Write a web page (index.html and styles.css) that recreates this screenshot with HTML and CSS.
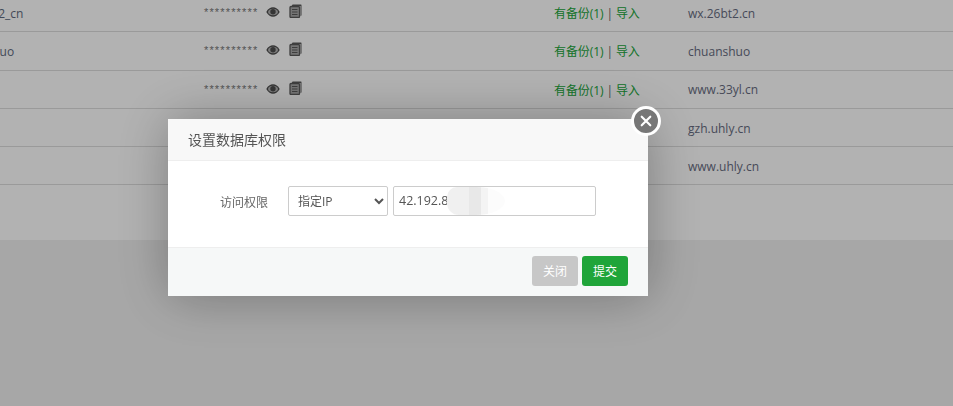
FILE: index.html
```html
<!DOCTYPE html>
<html lang="zh-CN">
<head>
<meta charset="utf-8">
<title>设置数据库权限</title>
<link rel="stylesheet" href="styles.css">
</head>
<body>
<main class="panel">
  <div class="row">
    <span class="name">wx_26bt2_cn</span>
    <span class="pw"><span class="stars">**********</span>
      <svg class="eye" viewBox="0 0 14 10"><path d="M0.3 5C2 1.8 4.3.3 7 .3S12 1.8 13.7 5C12 8.2 9.700 9.700 7 9.700S2 8.200.3 5Z" fill="#4c4c4c"/><ellipse cx="7" cy="5" rx="5" ry="3.300" fill="#b2b2b2"/><circle cx="7" cy="4.800" r="2.700" fill="#4c4c4c"/></svg>
      <svg class="copy" viewBox="0 0 13 14"><path d="M3 1.500Q3 .5 4 .5H12Q12.500.5 12.500 1V11Q12.500 12 11.500 12V2H3Z" fill="#5a5a5a"/><rect x="1" y="2.500" width="9.500" height="11" rx="1" fill="#a8a8a8" stroke="#5a5a5a" stroke-width="1.300"/><path d="M3 5.500H8.500M3 8H8.500M3 10.500H8.500" stroke="#5a5a5a" stroke-width="1"/></svg>
    </span>
    <span class="backup"><a class="ok">有备份(1)</a> <span class="sep">|</span> <a class="ok">导入</a></span>
    <span class="remark">wx.26bt2.cn</span>
  </div>
  <div class="row">
    <span class="name">chuanshuo</span>
    <span class="pw"><span class="stars">**********</span>
      <svg class="eye" viewBox="0 0 14 10"><path d="M0.3 5C2 1.8 4.3.3 7 .3S12 1.8 13.7 5C12 8.2 9.700 9.700 7 9.700S2 8.200.3 5Z" fill="#4c4c4c"/><ellipse cx="7" cy="5" rx="5" ry="3.300" fill="#b2b2b2"/><circle cx="7" cy="4.800" r="2.700" fill="#4c4c4c"/></svg>
      <svg class="copy" viewBox="0 0 13 14"><path d="M3 1.500Q3 .5 4 .5H12Q12.500.5 12.500 1V11Q12.500 12 11.500 12V2H3Z" fill="#5a5a5a"/><rect x="1" y="2.500" width="9.500" height="11" rx="1" fill="#a8a8a8" stroke="#5a5a5a" stroke-width="1.300"/><path d="M3 5.500H8.500M3 8H8.500M3 10.500H8.500" stroke="#5a5a5a" stroke-width="1"/></svg>
    </span>
    <span class="backup"><a class="ok">有备份(1)</a> <span class="sep">|</span> <a class="ok">导入</a></span>
    <span class="remark">chuanshuo</span>
  </div>
  <div class="row">
    <span class="name"></span>
    <span class="pw"><span class="stars">**********</span>
      <svg class="eye" viewBox="0 0 14 10"><path d="M0.3 5C2 1.8 4.3.3 7 .3S12 1.8 13.7 5C12 8.2 9.700 9.700 7 9.700S2 8.200.3 5Z" fill="#4c4c4c"/><ellipse cx="7" cy="5" rx="5" ry="3.300" fill="#b2b2b2"/><circle cx="7" cy="4.800" r="2.700" fill="#4c4c4c"/></svg>
      <svg class="copy" viewBox="0 0 13 14"><path d="M3 1.500Q3 .5 4 .5H12Q12.500.5 12.500 1V11Q12.500 12 11.500 12V2H3Z" fill="#5a5a5a"/><rect x="1" y="2.500" width="9.500" height="11" rx="1" fill="#a8a8a8" stroke="#5a5a5a" stroke-width="1.300"/><path d="M3 5.500H8.500M3 8H8.500M3 10.500H8.500" stroke="#5a5a5a" stroke-width="1"/></svg>
    </span>
    <span class="backup"><a class="ok">有备份(1)</a> <span class="sep">|</span> <a class="ok">导入</a></span>
    <span class="remark">www.33yl.cn</span>
  </div>
  <div class="row">
    <span class="name"></span><span class="pw"></span><span class="backup"></span>
    <span class="remark">gzh.uhly.cn</span>
  </div>
  <div class="row">
    <span class="name"></span><span class="pw"></span><span class="backup"></span>
    <span class="remark">www.uhly.cn</span>
  </div>
</main>

<div class="shade"></div>

<section class="dialog">
  <button class="close" type="button" aria-label="关闭">
    <svg viewBox="0 0 14 14"><path d="M2 2L12 12M12 2L2 12" stroke="#fff" stroke-width="2.500" stroke-linecap="round"/></svg>
  </button>
  <header class="dialog-head">设置数据库权限</header>
  <div class="dialog-body">
    <label class="field-label">访问权限</label>
    <select class="field-select"><option>指定IP</option></select>
    <div class="field-input">42.192.8<span class="smudge"></span></div>
  </div>
  <footer class="dialog-foot">
    <button class="btn btn-muted" type="button">关闭</button>
    <button class="btn btn-go" type="button">提交</button>
  </footer>
</section>
</body>
</html>
```

FILE: styles.css
```css
* { box-sizing: border-box; }
html, body { margin: 0; height: 100%; overflow: hidden; }
body {
  background: #f0f0f0;
  color: #666;
  font: 12px "Open Sans", "Noto Sans CJK SC", sans-serif;
}
.panel {
  background: #fff;
  height: 246px;
  margin: -6px 0 0;
}
.row {
  display: grid;
  grid-template-columns: 204px 350px 134px 1fr;
  height: 38.300px;
  padding-top: 1px;
  align-items: center;
  border-bottom: 1px solid #ddd;
}
.name {
  color: #5f6b80;
  margin-left: -48px;
  white-space: nowrap;
}
.pw { display: flex; align-items: center; }
.stars {
  width: 62px;
  margin-top: -2px;
  color: #777;
  font-family: "Liberation Sans", sans-serif;
  font-size: 11px;
  letter-spacing: 1.150px;
  transform-origin: left center;
  white-space: nowrap;
  word-spacing: 0;
}
.eye { width: 14px; height: 10px; display: block; margin: -2px 9px 0 0; }
.copy { width: 13px; height: 14px; display: block; margin-top: -4px; }
.backup { letter-spacing: -.1px; }
.ok { color: #20a53a; }
.sep { color: #666; }
.remark { color: #666b80; }

.shade {
  position: fixed;
  inset: 0;
  background: rgba(0, 0, 0, .3);
}
.dialog {
  position: fixed;
  left: 168px;
  top: 119px;
  width: 480px;
  height: 177px;
  display: flex;
  flex-direction: column;
  background: #fff;
  box-shadow: 1px 1px 50px rgba(0, 0, 0, .3);
}
.close {
  position: absolute;
  right: -13px;
  top: -13px;
  width: 30px;
  height: 30px;
  padding: 0;
  border: 3px solid #fff;
  border-radius: 50%;
  background: #777;
  display: flex;
  align-items: center;
  justify-content: center;
}
.close svg { width: 12px; height: 12px; }
.dialog-head {
  height: 42px;
  padding: 0 20px;
  line-height: 41px;
  font-size: 14px;
  color: #555;
  background: #f8f8f8;
  border-bottom: 1px solid #eee;
}
.dialog-body {
  flex: 1;
  display: flex;
  align-items: center;
  padding: 0 0 6px 52px;
}
.field-label { width: 48px; color: #666; text-align: right; margin: 2px 20px 0 0; }
.field-select {
  width: 100px;
  height: 30px;
  margin-right: 5px;
  padding: 0 5px;
  border: 1px solid #ccc;
  border-radius: 2px;
  background: #fff;
  color: #555;
  font: inherit;
}
.field-input {
  position: relative;
  width: 203px;
  height: 30px;
  padding: 0 5px;
  line-height: 28px;
  border: 1px solid #ccc;
  border-radius: 2px;
  color: #555;
  font-size: 12.500px;
}
.smudge {
  position: absolute;
  left: 53px;
  top: 0;
  width: 58px;
  height: 28px;
  border-radius: 10px 50% 50% 12px;
  background: linear-gradient(90deg, #f0f0f0 0 38%, #e8e8e8 38% 58%, #f4f4f4 58% 70%, #fcfcfc 70% 100%);
}
.dialog-foot {
  height: 49px;
  display: flex;
  justify-content: flex-end;
  align-items: center;
  gap: 4px;
  padding: 0 20px 2px 0;
  background: #f6f8f8;
  border-top: 1px solid #eee;
}
.btn {
  width: 46px;
  height: 30px;
  padding: 0;
  border: 0;
  border-radius: 3px;
  color: #fff;
  font: inherit;
}
.btn-muted { background: #c7c7c7; }
.btn-go { background: #20a53a; }
```
